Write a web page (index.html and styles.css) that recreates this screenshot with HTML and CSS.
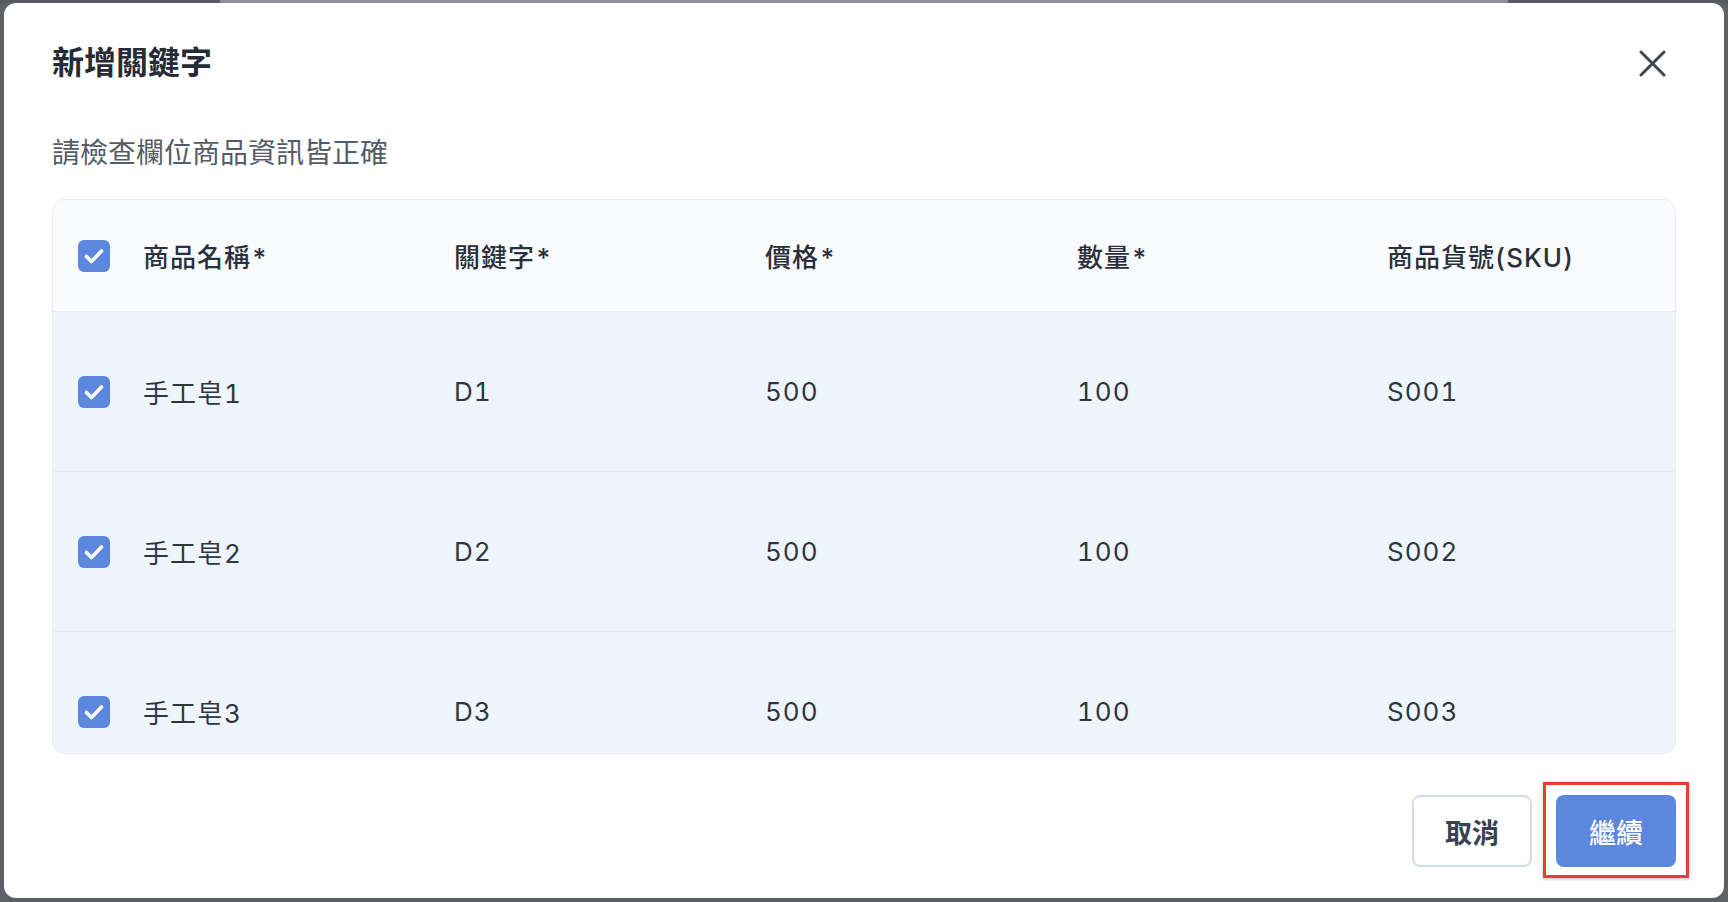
FILE: index.html
```html
<!DOCTYPE html>
<html lang="zh-Hant">
<head>
<meta charset="utf-8">
<title>新增關鍵字</title>
<link rel="stylesheet" href="styles.css">
</head>
<body>
<div class="topstrip"><span class="seg-dark"></span><span class="seg-light"></span><span class="seg-dark2"></span></div>
<div class="modal">
  <div class="modal-head">
    <h1 class="title">新增關鍵字</h1>
    <button class="close" aria-label="關閉">
      <svg width="27" height="27" viewBox="0 0 27 27"><path d="M2 2 L25 25 M25 2 L2 25" stroke="#3f4654" stroke-width="3" stroke-linecap="round" fill="none"/></svg>
    </button>
  </div>
  <p class="subtitle">請檢查欄位商品資訊皆正確</p>
  <div class="table">
    <div class="row head">
      <div class="cell cb"><span class="check"><svg width="32" height="32" viewBox="0 0 32 32"><path d="M8.5 16.5 L13.5 21.5 L23.5 11" stroke="#fff" stroke-width="3.6" stroke-linecap="round" stroke-linejoin="round" fill="none"/></svg></span></div>
      <div class="cell">商品名稱*</div>
      <div class="cell">關鍵字*</div>
      <div class="cell">價格*</div>
      <div class="cell">數量*</div>
      <div class="cell">商品貨號(SKU)</div>
    </div>
    <div class="body">
      <div class="row">
        <div class="cell cb"><span class="check"><svg width="32" height="32" viewBox="0 0 32 32"><path d="M8.5 16.5 L13.5 21.5 L23.5 11" stroke="#fff" stroke-width="3.6" stroke-linecap="round" stroke-linejoin="round" fill="none"/></svg></span></div>
        <div class="cell">手工皂1</div>
        <div class="cell">D1</div>
        <div class="cell">500</div>
        <div class="cell">100</div>
        <div class="cell">S001</div>
      </div>
      <div class="row">
        <div class="cell cb"><span class="check"><svg width="32" height="32" viewBox="0 0 32 32"><path d="M8.5 16.5 L13.5 21.5 L23.5 11" stroke="#fff" stroke-width="3.6" stroke-linecap="round" stroke-linejoin="round" fill="none"/></svg></span></div>
        <div class="cell">手工皂2</div>
        <div class="cell">D2</div>
        <div class="cell">500</div>
        <div class="cell">100</div>
        <div class="cell">S002</div>
      </div>
      <div class="row">
        <div class="cell cb"><span class="check"><svg width="32" height="32" viewBox="0 0 32 32"><path d="M8.5 16.5 L13.5 21.5 L23.5 11" stroke="#fff" stroke-width="3.6" stroke-linecap="round" stroke-linejoin="round" fill="none"/></svg></span></div>
        <div class="cell">手工皂3</div>
        <div class="cell">D3</div>
        <div class="cell">500</div>
        <div class="cell">100</div>
        <div class="cell">S003</div>
      </div>
    </div>
  </div>
  <div class="footer">
    <button class="btn btn-cancel">取消</button>
    <button class="btn btn-primary">繼續<span class="highlight"></span></button>
  </div>
</div>
</body>
</html>
```
FILE: styles.css
```css
* { box-sizing: border-box; }
html, body { margin: 0; padding: 0; }
body {
  width: 1728px;
  height: 902px;
  overflow: hidden;
  background: #5e6068;
  font-family: Inter, "Noto Sans CJK TC", sans-serif;
}
.topstrip {
  display: flex;
  height: 3px;
}
.seg-dark { width: 220px; background: #585a63; }
.seg-light { width: 1288px; background: #8f9099; }
.seg-dark2 { flex: 1; background: #585a63; }

.modal {
  margin-left: 4px;
  width: 1720px;
  height: 895px;
  background: #fff;
  border-radius: 12px;
  padding: 40px 48px 31px;
  display: flex;
  flex-direction: column;
}
.modal-head {
  height: 40px;
  display: flex;
  align-items: center;
  justify-content: space-between;
}
.title {
  margin: 0;
  font-size: 32px;
  font-weight: 700;
  color: #262b35;
  line-height: 40px;
}
.close {
  border: 0;
  background: none;
  padding: 0;
  margin-right: 10px;
  width: 27px;
  height: 27px;
  display: flex;
}
.subtitle {
  margin: 52px 0 0;
  font-size: 28px;
  line-height: 36px;
  color: #555b67;
}
.table {
  margin-top: 28px;
  height: 555px;
  border: 1px solid #e8ecf2;
  border-radius: 12px;
  overflow: hidden;
  display: flex;
  flex-direction: column;
}
.row {
  display: grid;
  grid-template-columns: 65px 311px 311px 312px 310px 1fr;
  align-items: center;
  padding-left: 25px;
  height: 160px;
  flex: none;
  font-size: 26px;
  color: #2f3541;
  background: #eff5fd;
  border-top: 1px solid #e5eaf1;
}
.row.head {
  height: 112px;
  background: #f9fbfe;
  border-top: 0;
  font-weight: 500;
  color: #2a303b;
  border-bottom: 1px solid #e9edf3;
}
.body {
  flex: 1;
  overflow: hidden;
}
.body .row:first-child { border-top: 0; height: 159px; }
.cell {
  white-space: nowrap;
  letter-spacing: 1px;
  font-variant-numeric: tabular-nums;
}
.check {
  display: block;
  width: 32px;
  height: 32px;
  border-radius: 6px;
  background: #5c87de;
}
.check svg { display: block; }

.footer {
  margin-top: 41px;
  display: flex;
  justify-content: flex-end;
  gap: 24px;
}
.btn {
  width: 120px;
  height: 72px;
  border-radius: 8px;
  font-family: Inter, "Noto Sans CJK TC", sans-serif;
  font-size: 27px;
  cursor: pointer;
  position: relative;
}
.btn-cancel {
  background: #fff;
  border: 2px solid #d4dce7;
  color: #3a4150;
  font-weight: 600;
}
.btn-primary {
  background: #5c87de;
  border: 0;
  color: #fff;
  font-weight: 500;
}
.highlight {
  position: absolute;
  left: -13px;
  top: -13px;
  right: -13px;
  bottom: -11px;
  border: 3px solid #e2412b;
  box-shadow: 0 1px 3px rgba(0,0,0,0.25);
  pointer-events: none;
}
```
